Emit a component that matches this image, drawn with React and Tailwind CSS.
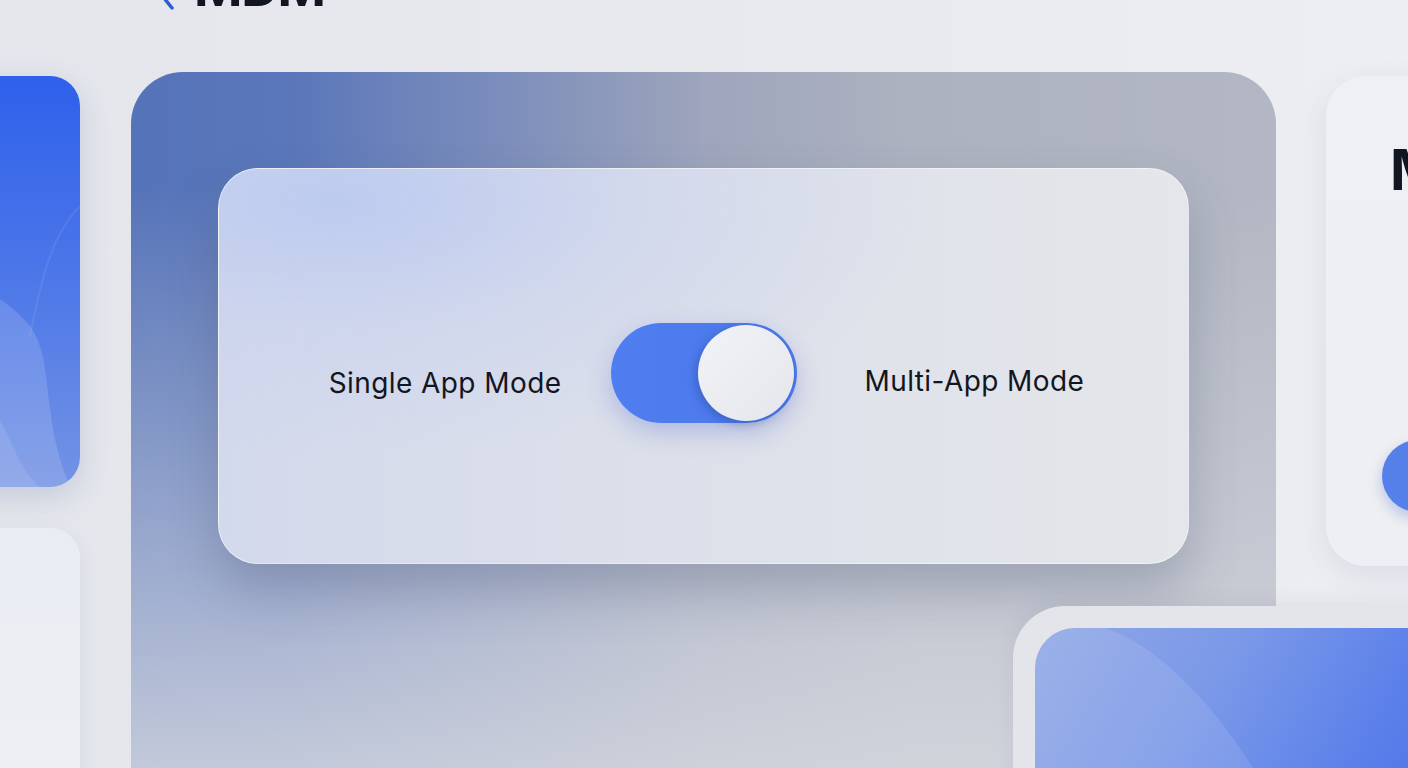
import React from 'react';

const Toggle = () => (
  <div className="w-[186px] h-[100px] shrink-0 rounded-full bg-[linear-gradient(to_right,#4f7ef0,#4b78ea)] flex items-center justify-end pr-[3px] shadow-[0_10px_24px_rgba(60,90,200,0.28)]">
    <div className="w-[96px] h-[96px] rounded-full bg-[linear-gradient(135deg,#f2f3f6,#e4e6eb)] shadow-[-3px_3px_8px_rgba(30,50,120,0.3)]" />
  </div>
);

const LeftWaves = () => (
  <svg className="absolute inset-0 w-full h-full" viewBox="0 0 160 411" preserveAspectRatio="none">
    <path d="M0 190 C40 200 80 215 110 250 C135 285 120 340 150 411 L0 411 Z" fill="#ffffff" opacity="0.14" />
    <path d="M0 280 C30 295 60 310 80 345 C95 370 100 395 120 411 L0 411 Z" fill="#ffffff" opacity="0.1" />
    <path d="M160 130 C130 160 120 210 110 260" stroke="#ffffff" strokeOpacity="0.08" strokeWidth="2" fill="none" />
  </svg>
);

const App = () => {
  return (
    <div className="relative w-[1408px] h-[768px] overflow-hidden bg-[linear-gradient(to_right,#e4e6ec,#e8eaee_60%,#eceef1)] font-['Inter','Liberation_Sans',sans-serif] text-[#121622]">
      <div className="h-[72px] flex flex-col">
        <div className="flex items-center gap-[18px] pl-[152px] -mt-[38px]">
          <svg width="24" height="44" viewBox="0 0 24 44" fill="none">
            <path d="M20 2 L4 22 L20 42" stroke="#2f5bd6" strokeWidth="3.5" strokeLinecap="round" strokeLinejoin="round" />
          </svg>
          <h1 className="text-[52px] leading-none font-bold tracking-tight">MDM</h1>
        </div>
      </div>

      <div className="flex items-start">
        <div className="-ml-[80px] w-[160px] shrink-0 mt-[4px] flex flex-col gap-[41px]">
          <div className="relative h-[411px] rounded-[30px] overflow-hidden bg-[linear-gradient(to_bottom,#2e60eb,#4a75e9_45%,#7493e4)] shadow-[0_10px_30px_rgba(60,80,140,0.18)]">
            <LeftWaves />
          </div>
          <div className="h-[300px] rounded-[30px] bg-[linear-gradient(to_bottom,#e9ecf3,#eff0f3)] shadow-[0_6px_20px_rgba(60,80,140,0.08)]" />
        </div>

        <div className="ml-[51px] w-[1145px] h-[760px] shrink-0 rounded-[52px] px-[87px] pt-[96px] bg-[linear-gradient(to_bottom,rgba(214,217,224,0)_15%,rgba(212,215,223,0.45)_55%,rgba(216,218,224,0.92)_100%),linear-gradient(to_right,#5573b9,#5b77ba_14%,#7b8dbb_32%,#9ea5bc_50%,#adb2c0_68%,#b3b7c3_100%)]">
          <div className="h-[396px] rounded-[40px] border border-white/50 bg-[radial-gradient(ellipse_at_12%_8%,rgba(188,202,240,0.95)_0%,rgba(200,210,238,0.5)_25%,transparent_50%),linear-gradient(to_right,#d3d9ec,#dde0ea_45%,#e4e6ea)] shadow-[0_26px_50px_rgba(70,80,110,0.3)] flex items-center justify-center pt-[14px] pl-[6px]">
            <span className="text-[28px] leading-none tracking-[0.015em] mt-[20px]">Single App Mode</span>
            <div className="ml-[50px] mr-[67px]">
              <Toggle />
            </div>
            <span className="text-[28px] leading-none tracking-[0.015em] mt-[16px]">Multi-App Mode</span>
          </div>
        </div>

        <div className="ml-[50px] w-[220px] h-[490px] shrink-0 mt-[4px] rounded-[40px] bg-[linear-gradient(to_bottom,#eff0f3,#eeeff2)] shadow-[0_10px_30px_rgba(60,80,140,0.1)] pl-[64px] pt-[66px] flex flex-col">
          <span className="text-[56px] leading-none font-bold">M</span>
          <div className="mt-[242px] -ml-[8px] w-[72px] h-[72px] rounded-full bg-[#5580ea] shadow-[0_6px_14px_rgba(60,90,200,0.3)]" />
        </div>
      </div>

      <div className="absolute left-[1013px] top-[606px] w-[520px] h-[300px] rounded-[52px] bg-[#e3e5ea] p-[22px] shadow-[0_-4px_20px_rgba(60,70,100,0.08)]">
        <div className="relative h-full rounded-[40px] overflow-hidden bg-[linear-gradient(120deg,#91a8e6,#7a98e8_35%,#5a7fea_65%,#3f6be9)]">
          <svg className="absolute inset-0 w-full h-full" viewBox="0 0 476 256" preserveAspectRatio="none">
            <path d="M0 0 L70 0 C130 20 190 90 230 160 L260 256 L0 256 Z" fill="#ffffff" opacity="0.1" />
          </svg>
        </div>
      </div>
    </div>
  );
};

export default App;
